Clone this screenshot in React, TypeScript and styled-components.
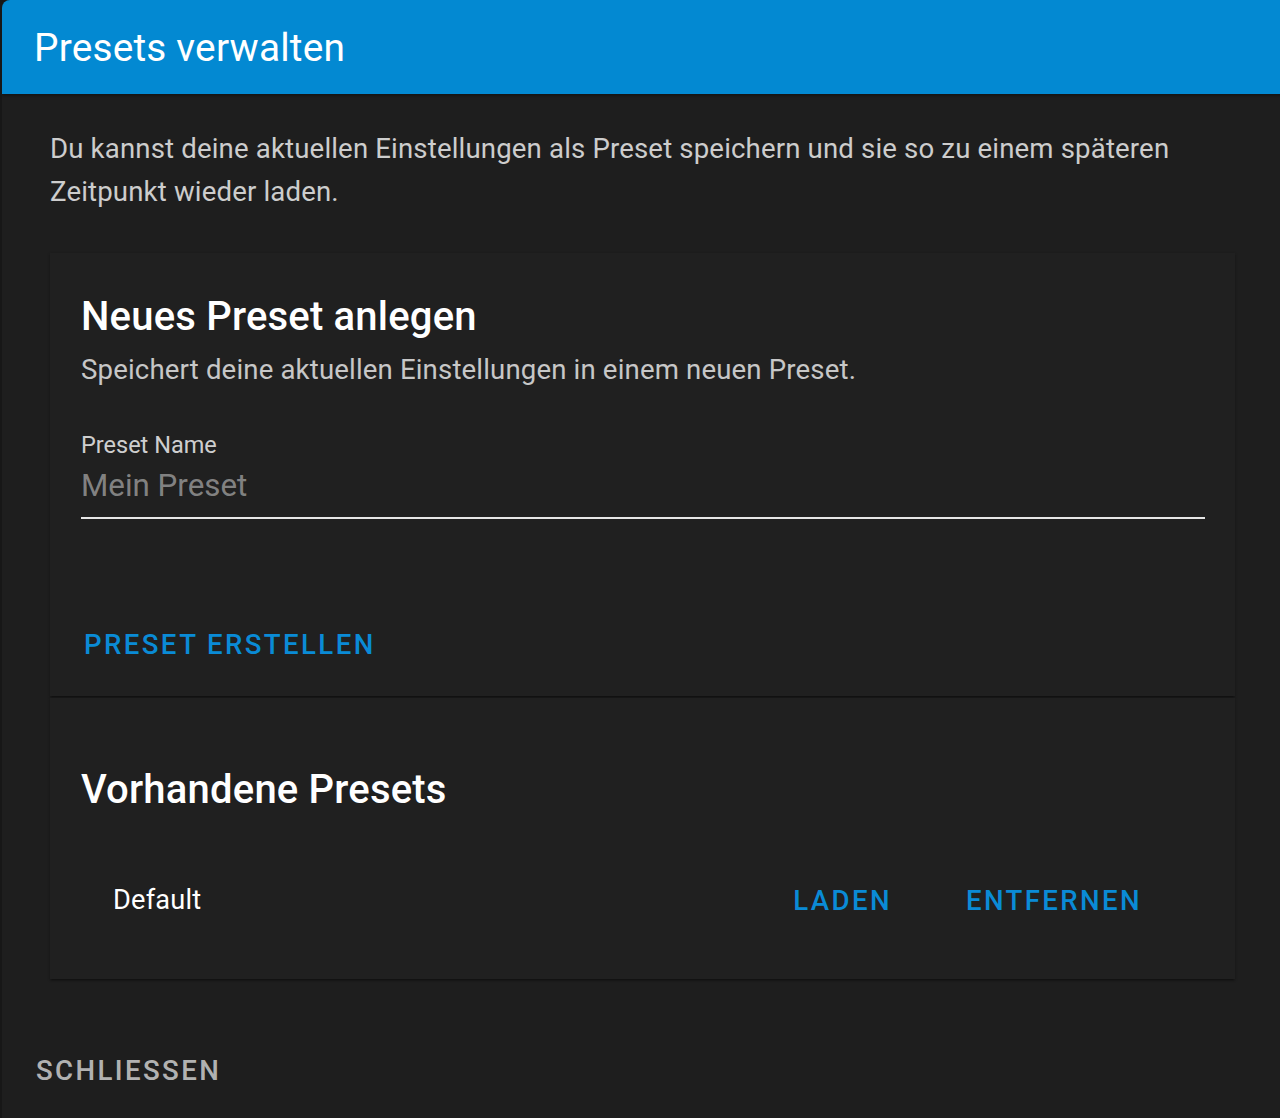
import React from "react";
import styled, { createGlobalStyle } from "styled-components";

const Global = createGlobalStyle`
  html, body { margin: 0; padding: 0; background: #181818; overflow: hidden; }
  body { font-family: Roboto, "Noto Sans", "Liberation Sans", sans-serif; }
  * { box-sizing: border-box; }
`;

const Backdrop = styled.div`
  width: 1280px;
  height: 1118px;
  overflow: hidden;
  padding-left: 2px;
  background: #171717;
`;

const Dialog = styled.div`
  width: 1281px;
  min-height: 1118px;
  background: #1e1e1e;
  border-top-left-radius: 8px;
  display: flex;
  flex-direction: column;
  overflow: hidden;
`;

const Header = styled.div`
  height: 94px;
  background: #0389d2;
  display: flex;
  align-items: center;
  padding-left: 32px;
  box-shadow: 0 2px 3px rgba(0, 0, 0, 0.35);
`;

const Title = styled.h1`
  margin: 0;
  font-size: 38.8px;
  font-weight: 400;
  color: #ffffff;
  letter-spacing: 0.2px;
`;

const Content = styled.div`
  padding: 33px 48px 0 48px;
  display: flex;
  flex-direction: column;
`;

const Intro = styled.p`
  margin: 0 0 40px;
  font-size: 27.6px;
  line-height: 43px;
  color: rgba(255, 255, 255, 0.78);
  letter-spacing: 0.15px;
  white-space: nowrap;
`;

const Card = styled.section<{ $pt: number; $pb: number }>`
  background: #202020;
  box-shadow: 0 2px 2px -1px rgba(0, 0, 0, 0.4), 0 1px 3px 0 rgba(0, 0, 0, 0.25);
  padding: ${(p) => p.$pt}px 30px ${(p) => p.$pb}px 31px;
  display: flex;
  flex-direction: column;
  & + & { margin-top: 2px; }
`;

const CardTitle = styled.h2`
  margin: 0;
  font-size: 40px;
  line-height: 46px;
  font-weight: 500;
  color: #ffffff;
  letter-spacing: 0.2px;
`;

const CardSub = styled.p`
  margin: 10px 0 0;
  font-size: 27.6px;
  line-height: 40px;
  color: rgba(255, 255, 255, 0.75);
  letter-spacing: 0.15px;
`;

const Field = styled.label`
  margin-top: 40px;
  display: flex;
  flex-direction: column;
`;

const FieldLabel = styled.span`
  font-size: 23.5px;
  line-height: 30px;
  color: rgba(255, 255, 255, 0.8);
`;

const Input = styled.input`
  margin-top: 5px;
  border: none;
  border-bottom: 2px solid #e6e6e6;
  background: transparent;
  outline: none;
  padding: 0 0 12px;
  font-family: inherit;
  font-size: 31.3px;
  line-height: 40px;
  height: 54px;
  color: #ffffff;
  &::placeholder { color: rgba(255, 255, 255, 0.45); }
`;

const TextButton = styled.button<{ $tone?: "primary" | "muted" }>`
  background: transparent;
  border: none;
  cursor: pointer;
  font-family: inherit;
  font-size: 27.6px;
  font-weight: 500;
  letter-spacing: 2.4px;
  text-transform: uppercase;
  height: 56px;
  padding: 0 3px;
  color: ${(p) => (p.$tone === "muted" ? "rgba(255,255,255,0.68)" : "#0a8bd6")};
`;

const CardActions = styled.div`
  margin-top: 97px;
  display: flex;
`;

const Row = styled.div`
  margin-top: 52px;
  height: 70px;
  display: flex;
  align-items: center;
  padding-left: 32px;
  padding-right: 60px;
`;

const RowName = styled.span`
  flex: 1;
  font-size: 27.2px;
  color: #ffffff;
  letter-spacing: 0.2px;
`;

const RowActions = styled.div`
  display: flex;
  gap: 68px;
`;

const DialogActions = styled.div`
  padding: 63px 0 0 31px;
  display: flex;
`;

export default function App() {
  return (
    <>
      <Global />
      <Backdrop>
        <Dialog>
          <Header>
            <Title>Presets verwalten</Title>
          </Header>
          <Content>
            <Intro>
              Du kannst deine aktuellen Einstellungen als Preset speichern und sie so zu einem späteren
              <br />
              Zeitpunkt wieder laden.
            </Intro>
            <Card $pt={41} $pb={24}>
              <CardTitle>Neues Preset anlegen</CardTitle>
              <CardSub>Speichert deine aktuellen Einstellungen in einem neuen Preset.</CardSub>
              <Field>
                <FieldLabel>Preset Name</FieldLabel>
                <Input placeholder="Mein Preset" />
              </Field>
              <CardActions>
                <TextButton>Preset erstellen</TextButton>
              </CardActions>
            </Card>
            <Card $pt={69} $pb={44}>
              <CardTitle>Vorhandene Presets</CardTitle>
              <Row>
                <RowName>Default</RowName>
                <RowActions>
                  <TextButton>Laden</TextButton>
                  <TextButton>Entfernen</TextButton>
                </RowActions>
              </Row>
            </Card>
          </Content>
          <DialogActions>
            <TextButton $tone="muted">Schliessen</TextButton>
          </DialogActions>
        </Dialog>
      </Backdrop>
    </>
  );
}
